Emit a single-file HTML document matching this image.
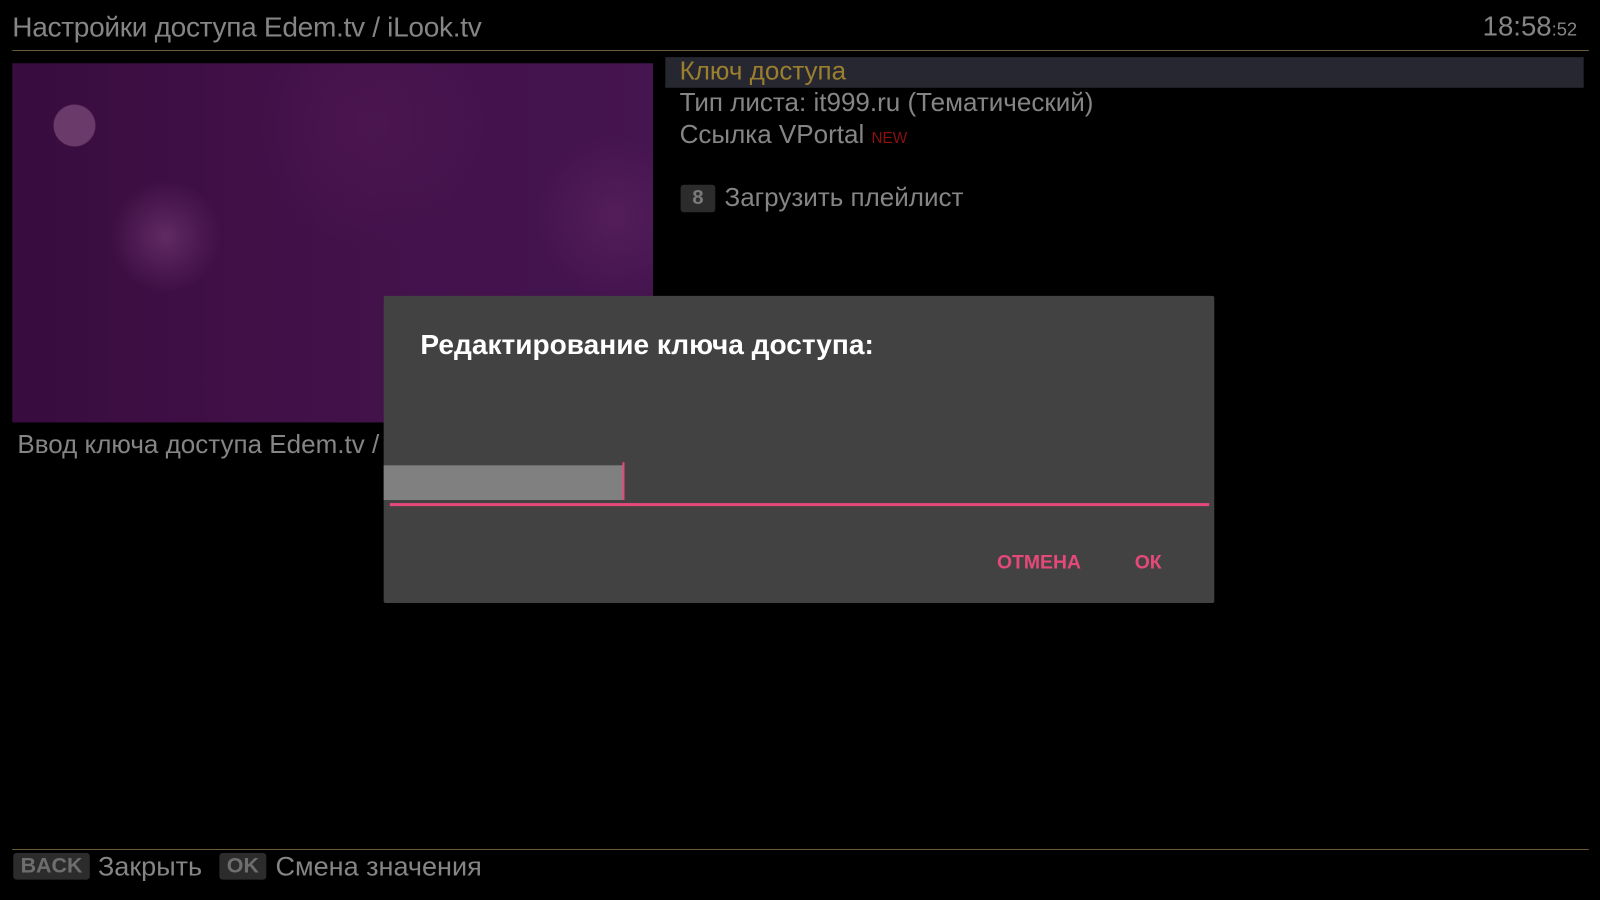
<!DOCTYPE html>
<html><head><meta charset="utf-8"><style>
html,body{margin:0;padding:0;background:#000;overflow:hidden;width:1600px;height:900px}
#s{position:absolute;left:0;top:0;width:1568px;height:882px;transform:scale(1.020408);transform-origin:0 0;font-family:"Liberation Sans","DejaVu Sans",sans-serif}
.a{position:absolute;white-space:nowrap}
.g{color:#858585}
.bd{position:absolute;background:#2c2c2c;color:#6e6e6e;font-weight:bold;border-radius:3px;text-align:center}
</style></head><body><div id="s">
<div class="a g" style="left:12px;top:11px;font-size:27.5px;letter-spacing:-0.3px">Настройки доступа Edem.tv / iLook.tv</div>
<div class="a g" style="left:1453px;top:11px;font-size:27px">18:58<span style="font-size:18px">:52</span></div>
<div class="a" style="left:12px;top:49px;width:1545px;height:1px;background:#6b5a3a"></div>
<div class="a" style="left:12px;top:62px;width:628px;height:352px;background:radial-gradient(circle at 61px 61px,#6a3a6a 0 20px,transparent 21px),radial-gradient(circle at 150px 170px,rgba(120,60,120,.6),transparent 55px),radial-gradient(circle at 590px 150px,rgba(100,40,100,.45),transparent 80px),radial-gradient(circle at 350px 60px,rgba(90,30,90,.35),transparent 120px),linear-gradient(90deg,#380c3e,#43114a 50%,#451550)"></div>
<div class="a" style="left:652px;top:56px;width:900px;height:30px;background:#272731"></div>
<div class="a" style="left:666px;top:56px;font-size:25.5px;color:#9a7f2e">Ключ доступа</div>
<div class="a g" style="left:666px;top:87px;font-size:25.5px">Тип листа: it999.ru (Тематический)</div>
<div class="a g" style="left:666px;top:118px;font-size:25.5px">Ссылка VPortal <span style="font-size:15px;color:#8a1010">NEW</span></div>
<div class="bd" style="left:667px;top:181px;width:34px;height:27px;font-size:20px;line-height:27px;color:#7a7a7a">8</div>
<div class="a g" style="left:710px;top:180px;font-size:25.5px">Загрузить плейлист</div>
<div class="a g" style="left:17px;top:422px;font-size:25.5px">Ввод ключа доступа Edem.tv /</div>
<div class="a" style="left:376px;top:290px;width:814px;height:301px;background:#424242;border-radius:2px">
<div class="a" style="left:36px;top:32px;font-size:27.5px;font-weight:bold;color:#fff">Редактирование ключа доступа:</div>
<div class="a" style="left:0;top:166px;width:235px;height:34px;background:#808080"></div>
<div class="a" style="left:234px;top:163px;width:2px;height:37px;background:#e5497a"></div>
<div class="a" style="left:6px;top:203px;width:803px;height:3px;background:#e5497a"></div>
<div class="a" style="left:601px;top:251px;font-size:19px;font-weight:bold;color:#e5497a">ОТМЕНА</div>
<div class="a" style="left:736px;top:251px;font-size:19px;font-weight:bold;color:#e5497a">ОК</div>
</div>
<div class="a" style="left:12px;top:832px;width:1545px;height:1px;background:#6b5a3a"></div>
<div class="bd" style="left:13px;top:836px;width:75px;height:26px;font-size:21px;line-height:26px">BACK</div>
<div class="a g" style="left:96px;top:834px;font-size:26.5px">Закрыть</div>
<div class="bd" style="left:215px;top:836px;width:46px;height:26px;font-size:21px;line-height:26px">OK</div>
<div class="a g" style="left:270px;top:834px;font-size:26.5px">Смена значения</div>
</div></body></html>
